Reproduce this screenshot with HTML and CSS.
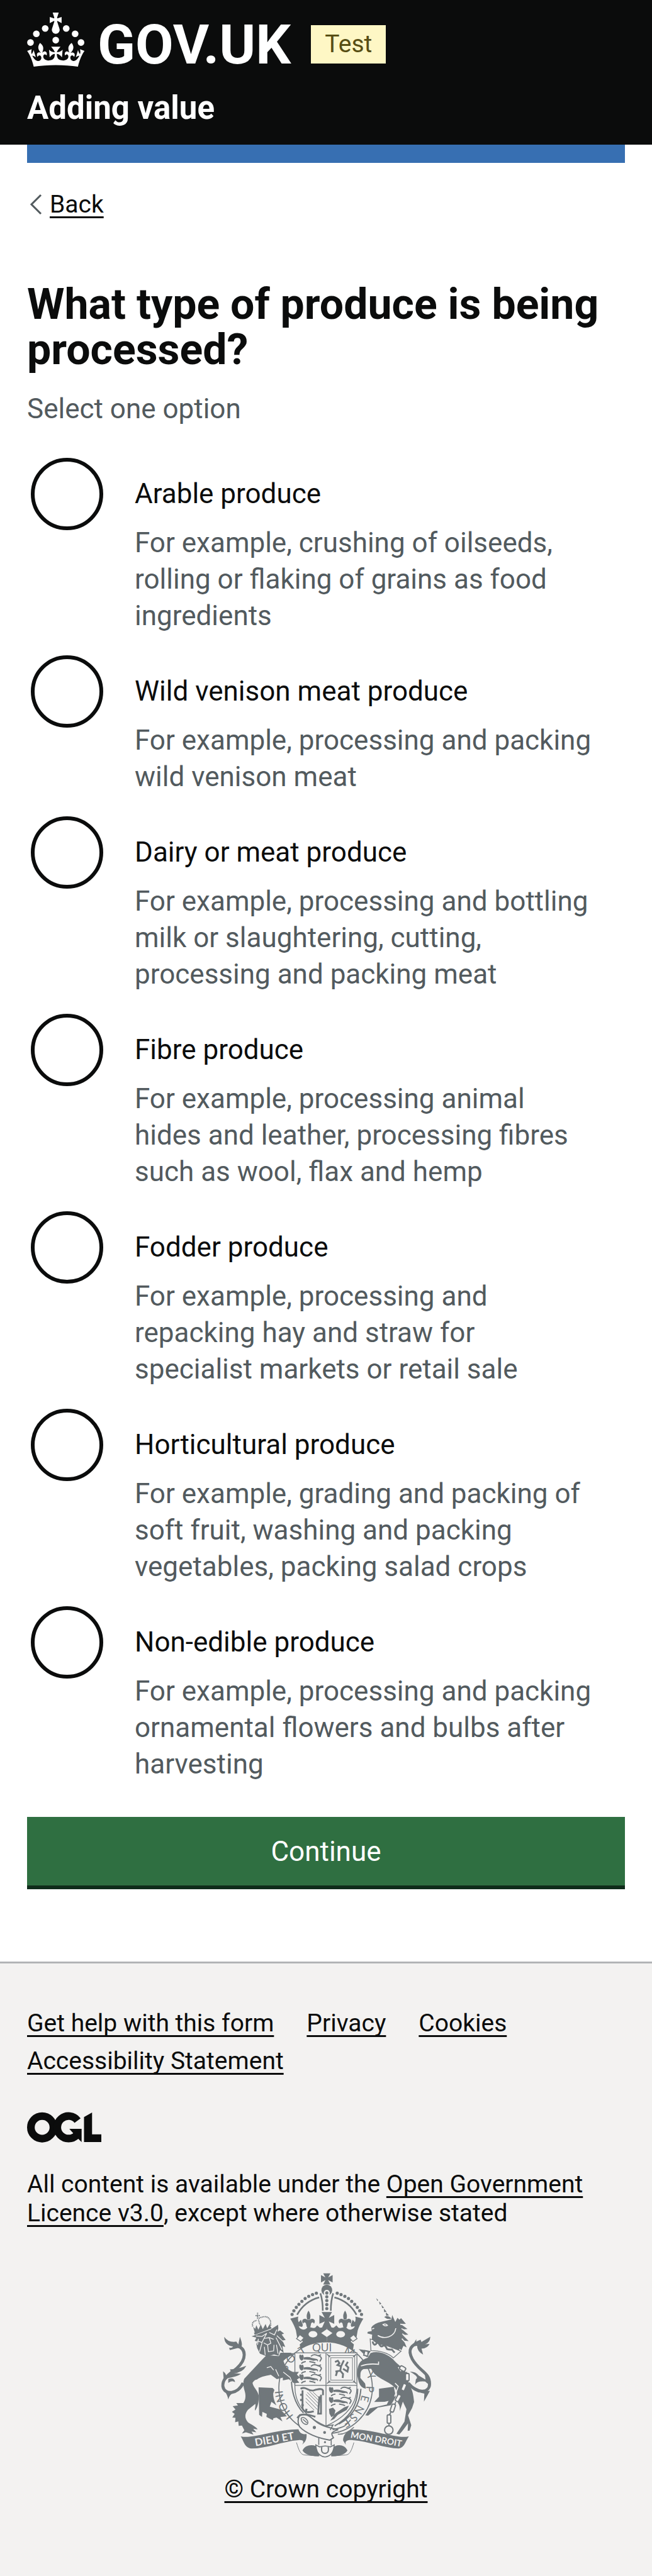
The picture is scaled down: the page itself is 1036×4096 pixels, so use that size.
FILE: index.html
```html
<!DOCTYPE html>
<html lang="en">
<head>
<meta charset="utf-8">
<meta name="viewport" content="width=device-width, initial-scale=1">
<title>What type of produce is being processed? - Adding value - GOV.UK</title>
<link rel="stylesheet" href="styles.css">
</head>
<body>
<header class="header">
  <div class="brand">
    <a class="brand-link" href="#">
      <svg class="brand-crown" viewBox="0 0 64 60" aria-hidden="true" fill="currentColor">
        <circle cx="20" cy="17.6" r="3.7"/><circle cx="10.2" cy="23.5" r="3.7"/><circle cx="3.7" cy="33.2" r="3.7"/>
        <circle cx="31.7" cy="30.6" r="3.7"/>
        <circle cx="43.3" cy="17.6" r="3.7"/><circle cx="53.2" cy="23.5" r="3.7"/><circle cx="59.7" cy="33.2" r="3.7"/>
        <path d="M33.1,9.8c.2-.1.3-.3.5-.5l4.6,2.4v-6.8l-4.6,1.5c-.1-.2-.3-.3-.5-.5l1.9-5.9h-6.7l1.9,5.9c-.2.1-.3.3-.5.5l-4.6-1.5v6.8l4.6-2.4c.1.2.3.3.5.5l-2.6,8c-.9,2.8,1.2,5.7,4.1,5.7h0c3,0,5.1-2.9,4.1-5.7l-2.6-8ZM37,37.9s-3.4,3.8-4.1,6.1c2.2,0,4.2-.5,6.4-2.8l-.7,8.5c-2-2.8-4.4-4.1-5.7-3.8.1,3.1.5,6.7,5.8,7.2,3.7.3,6.7-1.5,7-3.8.4-2.6-2-4.3-3.7-1.6-1.4-4.5,2.4-6.1,4.9-3.2-1.9-4.5-1.8-7.7,2.4-10.9,3,4,2.6,7.3-1.2,11.1,2.4-1.3,6.2,0,4,4.6-1.2-2.8-3.7-2.2-4.2.2-.3,1.7.7,3.7,3,4.2,1.9.3,4.7-.9,7-5.9-1.3,0-2.4.7-3.9,1.7l2.4-8c.6,2.3,1.4,3.7,2.2,4.5.6-1.6.5-2.8,0-5.3l5,1.8c-2.6,3.6-5.2,8.7-7.3,17.5-7.4-1.1-15.7-1.7-24.5-1.7h0c-8.8,0-17.1.6-24.5,1.7-2.1-8.9-4.7-13.9-7.3-17.5l5-1.8c-.5,2.5-.6,3.7,0,5.3.8-.8,1.6-2.3,2.2-4.5l2.4,8c-1.5-1-2.6-1.7-3.9-1.7,2.3,5,5.2,6.2,7,5.9,2.3-.4,3.3-2.4,3-4.2-.5-2.4-3-3.1-4.2-.2-2.2-4.6,1.6-6,4-4.6-3.7-3.7-4.2-7.1-1.2-11.1,4.2,3.2,4.3,6.4,2.4,10.9,2.5-2.8,6.3-1.3,4.9,3.2-1.8-2.7-4.1-1-3.7,1.6.3,2.3,3.3,4.1,7,3.8,5.4-.5,5.7-4.2,5.8-7.2-1.3-.2-3.7,1-5.7,3.8l-.7-8.5c2.2,2.3,4.2,2.7,6.4,2.8-.7-2.3-4.1-6.1-4.1-6.1h10.6,0Z"/>
      </svg>
      <span class="brand-name">GOV.UK</span>
    </a>
    <strong class="tag">Test</strong>
  </div>
  <a class="service" href="#">Adding value</a>
</header>

<div class="container">
  <div class="stripe"></div>
  <nav class="back">
    <svg class="back-icon" viewBox="0 0 20 34" aria-hidden="true"><path d="M18 2 3 17l15 15"/></svg>
    <a class="link" href="#">Back</a>
  </nav>
  <main>
    <form>
      <fieldset class="fieldset" aria-describedby="produce-hint">
        <legend class="legend"><h1 class="heading">What type of produce is being processed?</h1></legend>
        <p class="hint" id="produce-hint">Select one option</p>
        <div class="radios">
          <div class="radio">
            <input class="radio-input" type="radio" name="produce" id="p1" aria-describedby="h1">
            <label class="radio-label" for="p1">Arable produce</label>
            <p class="hint radio-hint" id="h1">For example, crushing of oilseeds, rolling or flaking of grains as food ingredients</p>
          </div>
          <div class="radio">
            <input class="radio-input" type="radio" name="produce" id="p2" aria-describedby="h2">
            <label class="radio-label" for="p2">Wild venison meat produce</label>
            <p class="hint radio-hint" id="h2">For example, processing and packing wild venison meat</p>
          </div>
          <div class="radio">
            <input class="radio-input" type="radio" name="produce" id="p3" aria-describedby="h3">
            <label class="radio-label" for="p3">Dairy or meat produce</label>
            <p class="hint radio-hint" id="h3">For example, processing and bottling milk or slaughtering, cutting, processing and packing meat</p>
          </div>
          <div class="radio">
            <input class="radio-input" type="radio" name="produce" id="p4" aria-describedby="h4">
            <label class="radio-label" for="p4">Fibre produce</label>
            <p class="hint radio-hint" id="h4">For example, processing animal hides&nbsp;and leather, processing fibres such as wool, flax and hemp</p>
          </div>
          <div class="radio">
            <input class="radio-input" type="radio" name="produce" id="p5" aria-describedby="h5">
            <label class="radio-label" for="p5">Fodder produce</label>
            <p class="hint radio-hint" id="h5">For example, processing and repacking hay and straw for specialist markets or retail sale</p>
          </div>
          <div class="radio">
            <input class="radio-input" type="radio" name="produce" id="p6" aria-describedby="h6">
            <label class="radio-label" for="p6">Horticultural produce</label>
            <p class="hint radio-hint" id="h6">For example, grading and packing of soft fruit, washing and packing vegetables, packing salad crops</p>
          </div>
          <div class="radio">
            <input class="radio-input" type="radio" name="produce" id="p7" aria-describedby="h7">
            <label class="radio-label" for="p7">Non-edible produce</label>
            <p class="hint radio-hint" id="h7">For example, processing and packing ornamental flowers and bulbs after harvesting</p>
          </div>
        </div>
      </fieldset>
      <button class="button" type="submit">Continue</button>
    </form>
  </main>
</div>

<footer class="footer">
  <ul class="footer-links">
    <li><a class="link" href="#">Get help with this form</a></li>
    <li><a class="link" href="#">Privacy</a></li>
    <li><a class="link" href="#">Cookies</a></li>
    <li><a class="link" href="#">Accessibility Statement</a></li>
  </ul>
  <svg class="ogl" viewBox="135 64 369 149" role="img" aria-label="Open Government Licence">
    <g fill="none" stroke="currentColor" stroke-width="38">
      <circle cx="210" cy="139" r="56"/>
      <path d="M386 105A56 56 0 1 0 382 177"/>
    </g>
    <path fill="currentColor" d="M345 146h61v66l-16-16-24-26zM418 88l40-23v109h46v38h-86z"/>
  </svg>
  <p class="licence">All content is available under the <a class="link" href="#">Open Government Licence v3.0</a>, except where otherwise stated</p>
  <a class="copyright" href="#">
    <svg class="crest" viewBox="84 82 1046 922" aria-hidden="true">
      <defs>
        <path id="garter-left" d="M446 794A212 212 0 0 1 605 438"/>
        <g id="passant">
          <path d="M8 4q8-6 10 2l4-4 6 2 2 10-2 12-8 6-8-6-4-10zM30 16q20-6 40 2l26 6q8 4 4 12l-6-6-16 2q-20-8-48-6z"/>
          <path d="M66 10q12-12 28-6 12 6 22-2m-18 4q20 4 20 16l-8 14M40 36l-14 4-8 6M58 36l20 4 10 4" fill="none" stroke="#70777b" stroke-width="6"/>
        </g>
        <g id="fleur">
          <path d="M0-50q14 20 7 44h-14q-7-24 7-44zM-5-4c-20-14-34 4-22 20 2-8 10-10 14-2l4 18H9l4-18c4-8 12-6 14 2 12-16-2-34-22-20z"/>
        </g>
        <g id="crown-side">
          <circle cx="-173" cy="229" r="8"/><circle cx="-164" cy="211" r="8"/><circle cx="-152" cy="194" r="8"/><circle cx="-139" cy="179" r="8"/><circle cx="-124" cy="164" r="8"/><circle cx="-108" cy="150" r="8"/><circle cx="-90" cy="139" r="8"/><circle cx="-71" cy="130" r="8"/><circle cx="-52" cy="123" r="8"/>
          <path d="M-148 231Q-112 164-38 144M-32 124Q-20 160-20 211" fill="none" stroke="#70777b" stroke-width="8"/>
          <path d="M-182 250l40-10q-4 16 2 28l11-12 10 26-4 10-17-4c8 20 30 22 42 8v-12q20 16 40 12l10-12 14 12 34-4v92q-70 0-130 24l-5-29 16-14-15-16-12 6-8-46q-8-26-28-59z"/>
          <use href="#fleur" x="-91" y="260"/>
          <ellipse cx="-69" cy="328" rx="22" ry="16" fill="#f3f2f1"/>
          <path d="M-134 330l20 16-16 18-21-14z" fill="#f3f2f1" stroke="#70777b" stroke-width="4"/>
        </g>
      </defs>
      <g fill="#70777b">
        <!-- royal crown -->
        <g transform="translate(611 60)">
          <path d="M-18 24h36L7 45l22-12v37L7 58l11 22h-36l11-22-22 12V33l22 12z"/>
          <circle cx="0" cy="108" r="27"/>
          <use href="#crown-side"/>
          <use href="#crown-side" transform="scale(-1 1)"/>
          <circle cx="0" cy="122" r="15" fill="#f3f2f1"/>
          <path d="M-13 124h26v86h-26z" fill="#f3f2f1"/>
          <circle cx="0" cy="122" r="8"/><circle cx="0" cy="141" r="8"/><circle cx="0" cy="160" r="8"/><circle cx="0" cy="180" r="8"/><circle cx="0" cy="200" r="8"/>
          <path d="M-26 217h52L10 246l27-14v44l-27-12 14 32h-48l14-32-27 12v-44l27 14z"/>
          <path d="M0 303l28 19-28 20-28-20z" fill="#f3f2f1"/>
        </g>

        <!-- garter and shield -->
        <ellipse cx="605" cy="655" rx="233" ry="229" fill="#f3f2f1" stroke="#70777b" stroke-width="5"/>
        <path d="M380 480l56 0-50 50-20-20zM770 462l60 10-20 30z"/>
        <path d="M435 625c4 70 26 120 60 156M452 635c4 56 20 90 44 116M765 660c0 90-50 150-115 185M781 660c-6 80-46 140-110 176" fill="none" stroke="#70777b" stroke-width="6"/>
        <g class="crest-letters">
          <text><textPath href="#garter-left">HONI</textPath></text>
          <text x="410" y="575" transform="rotate(-62 410 575)">S</text>
          <text x="432" y="538" transform="rotate(-50 432 538)">O</text>
          <text x="484" y="492" transform="rotate(-32 484 492)">T</text>
          <text x="538" y="474">QUI</text>
          <text x="694" y="482" transform="rotate(24 694 482)">M</text>
          <text x="806" y="590" transform="rotate(60 806 590)">Y</text>
          <text x="808" y="646" transform="rotate(92 808 646)">P</text>
          <text x="786" y="690" transform="rotate(104 786 690)">E</text>
          <text x="766" y="738" transform="rotate(118 766 738)">N</text>
          <text x="742" y="780" transform="rotate(135 742 780)">S</text>
          <text x="712" y="808" transform="rotate(148 712 808)">E</text>
        </g>
        <path d="M452 481h309v170c0 100-76 160-154 195-80-35-155-95-155-195z" fill="#f3f2f1" stroke="#70777b" stroke-width="4"/>
        <path d="M607 481v365M452 643h309" stroke="#70777b" stroke-width="4"/>
        <use href="#passant" x="466" y="488"/><use href="#passant" x="466" y="538"/><use href="#passant" x="466" y="586"/>
        <use href="#passant" x="614" y="650"/><use href="#passant" x="614" y="700"/>
        <path d="M622 760l20-6 12 14-6 24-14 10-10-18zM654 782l44-30 24-8-12 22-44 24-18 20-20 10z"/>
        <g fill="none" stroke="#70777b">
          <path d="M620 494h130v134H620z" stroke-width="3"/><path d="M631 505h108v112H631z" stroke-width="3"/>
          <path d="M612 488l16 14M758 488l-16 14M612 634l16-14M758 634l-16-14" stroke-width="5"/>
          <path d="M652 526l14-6 8 12-10 10 18 6 14-30M682 548l-4 22-24 4M678 570l14 16-2 20M662 576l-6 20M692 560l22 14 4-20-12-12 10-16" stroke-width="9"/>
          <path d="M480 660c30-14 36 14 66 8 20-6 40-12 46 0v24M490 668v90c10 24 34 20 56 14M582 690v94h-14l6-86" stroke-width="9"/>
          <path d="M478 690h12M478 716h12M484 742h12M510 760l-4 18" stroke-width="10"/>
          <path d="M508 688l64 66M514 678l62 62M524 672l54 54M506 706l58 58M506 724l42 42M542 676l38 36" stroke-width="3"/>
        </g>

        <!-- buckle and strap -->
        <path d="M476 790c50-10 60 24 100 46 30 16 60 22 92 28-40 12-36 22-24 40l-18 12c-60-10-120-34-150-66-12-20-8-44 0-60z" fill="#f3f2f1" stroke="#70777b" stroke-width="6"/>
        <path d="M464 806c10-20 40-24 90-6" fill="none" stroke="#70777b" stroke-width="9"/>
        <path d="M484 806c16-10 40 16 30 30-16 6-34-14-30-30zM492 812l20 18M606 846l36-6-14 26M640 864c60-14 60-14 90-50M666 886c30 4 60-16 80-34" fill="none" stroke="#70777b" stroke-width="5"/>
        <circle cx="549" cy="853" r="8"/><circle cx="600" cy="878" r="7"/><circle cx="602" cy="926" r="5"/>
        <path d="M571 904v36M633 914v28" stroke="#70777b" stroke-width="5"/>

        <!-- lion -->
        <g transform="translate(60 255)">
          <path d="M230 258l-90 97c-8 20-5 35 0 55 10 30 6 50-5 66h-35l8 12-26 4 14 16-18 12 14 10-12 18 16 2-2 22 16-4 2 22 16-2 12 24-12 16 20-6 38 12-10-16 24 4-16-18 22 4c-6-14-36-26-48-36-18-22-16-42 0-62l37-30c2 14-4 26-2 34 12-12 20-40 19-75-6-28-30-44-31-64 6-10 14-16 21-16 25-18 55-20 70-24l30 22 30-8v14l30-6 25 20 27-2-12-16 15-10-15-15 10-13-30 0c-30-12-40-32-48-58l58-36-46 4-20 12-75-6z"/>
          <path d="M211 398l70 3 9 9-6 18c0 24 6 40 16 60l-25-18-8 24 53 14 32 34-32 4 10 22-30-20-15 4-3 10-32-17 2-15-22-10-2 25-14-10z"/>
          <path d="M134 376C110 432 40 440 33 392c-2-40 30-56 70-90 50-44 46-96 4-110" fill="none" stroke="#70777b" stroke-width="15"/>
          <path d="M40 146q20 30 60 24l10 14 8-38q24 60-10 56l-40 10-4-12q14 4 20-6-44-6-44-48zM34 318q24 16 10 40 40-30 24-50 40-2 82-18-20 38-68 36l42 4q-20 14-66 22l-20 16zM60 458q-6-30-22-44 40 20 60 4-30 10-38 40zM60 356q30-10 34 16-16-12-34 4z"/>
          <path d="M176 144l94-34 38-24q4 18-2 34l12-6 20 16-12 4 20 28-16 2 14 32-14-4 6 34-18-14-8 28-22-6-34 10-36-14-14-28-4-20 6-12-14-4 8-16z"/>
          <path d="M198 142l30 2 24-16M264 124l26 12 12-26M252 128l-14 26 26-4 22 8M238 154l-10 20-24-8M264 150l8 28-16 8-20-10M256 186l4 34 26-4 2-30M228 176l-12 44M298 150l30 60M302 140l32 30M300 186l8 44M240 196l4 40M210 156l-4 30M252 300l20-6 14 18M296 308l16 34M334 322l34 26 8 20" fill="none" stroke="#f3f2f1" stroke-width="4"/>
          <path d="M188 126l84-30 4 8-84 32zM190 118l-6-22 10 10 6-18 10 22 12-26 10 24 14-26 8 22 14-24 4 24-78 26z"/>
          <path d="M182 94q-8-24 20-30M212 54q44-22 58 12l2 24M206 26v32M196 40h22M210 60l8 26" fill="none" stroke="#70777b" stroke-width="6" stroke-dasharray="5 3"/>
        </g>

        <!-- unicorn -->
        <g transform="translate(705 180)">
          <path d="M110 325l14-23c36-12 76 0 111 30 25 30 50 40 68 70l14 60c20 30 20 55 24 84l-10 30-20 36 16 50-8 26-10 2 2-38-30 40-14 16-14-4 40-60 10-62-18-38-16 48q4-26-8-40l-8-24q8-30-6-52c-36-40-96-44-120-96l-38 2c-20 8-14 30-16 44l24 28 4 26q-26-4-36-34l-8-36c2-60 16-72 53-85z"/>
          <path d="M166 480l74-10 10 50-25 42-65 12-48 40-14-2 22-34 85-20 9-18-20 5-52 1 24-26z"/>
          <path d="M110 196l20-4-2-18q14-20 50-28l50-12 4-22 14 32c20 10 34 60 34 96l-14 50-56-24-52-10-28-18 2-28-24-6z"/>
          <path d="M152 28l10 10-4 4zM166 44l12 12-8 4zM178 62l14 14-10 2zM190 80l14 16-12 2zM200 98l16 16-14 2zM192 122q20-12 36 8-20 6-36-8zM258 126l10 10 8-8 24 28-24 2 32 24-26 2 30 26-28 2 30 30-24-2 14 34-16-8-10 22-14-12q28-70-16-130z"/>
          <path d="M186 160q14-8 22 4-12 6-22-4zM132 182l10-4M160 214c30 20 84 10 90-36M278 180l28 14M282 206l26 18M280 230l22 24M272 158l30 4" fill="none" stroke="#f3f2f1" stroke-width="5"/>
          <path d="M122 232l14 4q26 26 56 24l84 32-38 34q-40-36-112-36z" fill="#f3f2f1" stroke="#70777b" stroke-width="4"/>
          <path d="M134 244q6 24 18 12 8-16 18 6 8 14 20 0 12 6 16 20 12 4 24 2l14 16" fill="none" stroke="#70777b" stroke-width="9"/>
          <path d="M312 452c50 60 106 46 106 4 0-60-50-60-86-124-26-50-6-70 44-90" fill="none" stroke="#70777b" stroke-width="15"/>
          <path d="M352 232v30l70-42q-2 30-26 38l22-2q-10 22-40 24l8 30q-30-16-30-44l-26 4zM320 394q30 0 44 20l34 20-4-30q34 20 26 60l-24-20q-40-4-50 16l4-28q20-10-30-38zM340 470q20 30 52 34l-2 40q14-24 30-54l-30 4z"/>
          <path d="M76 366q40-14 88-8v-14M246 452l16 16-18 50M262 372l14 20" fill="none" stroke="#f3f2f1" stroke-width="5"/>
          <g fill="#f3f2f1" stroke="#70777b" stroke-width="6">
            <rect x="274" y="364" width="20" height="30" rx="8" transform="rotate(-60 284 379)"/>
            <rect x="298" y="404" width="18" height="36" rx="6"/>
            <rect x="281" y="454" width="18" height="36" rx="6" transform="rotate(22 290 472)"/>
            <rect x="253" y="508" width="18" height="36" rx="6" transform="rotate(28 262 526)"/>
            <rect x="226" y="556" width="18" height="40" rx="6" transform="rotate(18 235 576)"/>
            <rect x="207" y="610" width="18" height="42" rx="6"/>
            <path d="M304 396v10M300 442l-4 12M278 492l-8 16M250 546l-6 12M226 596l-8 14M216 652v12"/>
            <circle cx="215" cy="686" r="21"/>
            <path d="M96 290l16 4-2 24-20-6z"/>
          </g>
        </g>

        <!-- motto scroll -->
        <path d="M182 897q20 4 43 2c80-10 160-38 245-37 6 20 20 26 40 24 2 22-4 40-22 52 10-14 8-24-18-22-80 6-160 42-235 42-36-6-38-40-53-61zM1020 897q-20 4-45 2c-80-10-150-36-235-36-30 4-48 30-48 55l14 22c-6-18 4-26 34-24 80 6 160 40 230 42 30-6 34-40 50-61z"/>
        <path d="M490 968c14-34 64-34 84-10v38c-30 2-70-4-84-28zM714 968c-14-34-60-34-76-10l-6 38c30 2 68-4 82-28z"/>
        <path d="M460 928c12 40 20 60 40 62l70 5M746 928c-12 40-20 60-40 62l-70 5" fill="none" stroke="#70777b" stroke-width="3"/>
        <path d="M556 940q4 56 46 60 42-4 46-60l-20 10q-24-10-52 0z" fill="#f3f2f1" stroke="#70777b" stroke-width="5"/>
        <path d="M586 950q-6 32 16 32t16-32" fill="none" stroke="#70777b" stroke-width="6"/>
        <text class="crest-motto" x="256" y="946" transform="rotate(-10 256 946)">DIEU ET</text>
        <text class="crest-motto crest-motto-long" x="728" y="904" transform="rotate(10 728 904)">MON DROIT</text>
      </g>
    </svg>
    <span class="link">© Crown copyright</span>
  </a>
</footer>
</body>
</html>
```
FILE: styles.css
```css
* {
  box-sizing: border-box;
}

body {
  margin: 0;
  background: #fff;
  color: #0b0c0c;
  font-family: Roboto, "Liberation Sans", sans-serif;
  font-size: 44px;
  line-height: 58px;
}

p,
h1,
ul {
  margin: 0;
  padding: 0;
}

.link {
  color: inherit;
  text-decoration: underline;
  text-decoration-thickness: 3px;
  text-underline-offset: 6px;
  text-decoration-skip-ink: none;
}

/* Header */

.header {
  padding: 20px 43px 29px;
  background: #0b0c0c;
  color: #fff;
}

.brand {
  display: flex;
  align-items: center;
  gap: 32px;
  height: 86px;
  margin-bottom: 37px;
}

.brand-link {
  display: flex;
  align-items: center;
  gap: 20px;
  color: inherit;
  text-decoration: none;
}

.brand-crown {
  width: 92px;
  height: 86px;
}

.brand-name {
  font-size: 88px;
  font-weight: 700;
  line-height: 72px;
  padding-top: 16px;
}

.tag {
  margin-top: 15px;
  padding: 0 22px;
  background: #fef7c5;
  color: #574e14;
  font-size: 39px;
  font-weight: 400;
  line-height: 61px;
}

.service {
  display: block;
  color: inherit;
  font-size: 51px;
  font-weight: 700;
  text-decoration: none;
}

/* Page body */

.container {
  padding: 0 43px;
}

.stripe {
  height: 29px;
  background: #376fb2;
}

.back {
  display: flex;
  align-items: center;
  gap: 12px;
  margin: 42px 0 99px;
  padding-left: 4px;
  font-size: 39px;
  line-height: 48px;
}

.back-icon {
  width: 20px;
  height: 34px;
  fill: none;
  stroke: #525a5e;
  stroke-width: 3;
}

.fieldset {
  min-width: 0;
  margin: 0;
  padding: 0;
  border: 0;
}

.legend {
  padding: 0;
}

.heading {
  margin-bottom: 29px;
  font-size: 68px;
  font-weight: 700;
  line-height: 72px;
}

.hint {
  color: #525a5e;
}

.radios {
  display: grid;
  gap: 34px;
  margin-top: 49px;
}

.radio {
  display: grid;
  grid-template-columns: 115px 1fr;
  grid-template-rows: 86px auto;
  column-gap: 50px;
  padding: 0 43px 0 6px;
}

.radio-input {
  appearance: none;
  grid-row: 1 / 3;
  width: 115px;
  height: 115px;
  margin: 0;
  border: 6px solid #0b0c0c;
  border-radius: 50%;
  background: #fff;
}

.radio-input:checked {
  box-shadow: inset 0 0 0 20px #fff;
  background: #0b0c0c;
}

.radio-label {
  padding-top: 28px;
}

.radio-hint {
  grid-column: 2;
  margin-top: 20px;
}

.button {
  display: block;
  width: 100%;
  margin: 55px 0 115px;
  padding: 26px 0 25px;
  border: 0;
  border-bottom: 6px solid #0f2c1a;
  border-radius: 0;
  background: #2f6f41;
  color: #fff;
  font: inherit;
}

/* Footer */

.footer {
  padding: 65px 43px 114px;
  border-top: 3px solid #b2b4b6;
  background: #f3f2f1;
  font-size: 39px;
  line-height: 46px;
}

.footer-links {
  display: flex;
  flex-wrap: wrap;
  column-gap: 52px;
  line-height: 60px;
  list-style: none;
}

.ogl {
  display: block;
  width: 118px;
  height: 49px;
  margin: 51px 0 43px;
}

.copyright {
  display: flex;
  flex-direction: column;
  align-items: center;
  gap: 26px;
  width: max-content;
  margin: 72px auto 0;
  color: inherit;
  line-height: 48px;
  text-decoration: none;
}

.crest {
  width: 334px;
  height: 294px;
}

.crest-letters {
  font-family: Lato, sans-serif;
  font-size: 54px;
}

.crest-motto {
  fill: #f3f2f1;
  font-family: Lato, sans-serif;
  font-size: 52px;
  font-weight: 700;
}

.crest-motto-long {
  font-size: 44px;
}
```
